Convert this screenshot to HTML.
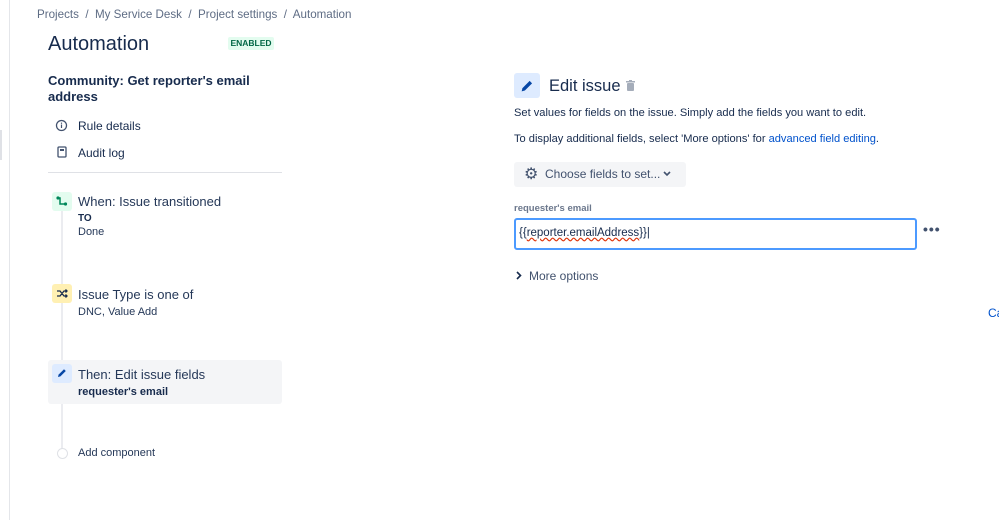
<!DOCTYPE html>
<html><head><meta charset="utf-8"><style>
*{margin:0;padding:0;box-sizing:border-box}
body{width:999px;height:520px;overflow:hidden;background:#fff;font-family:"Liberation Sans",sans-serif;color:#172b4d;position:relative}
.a{position:absolute;white-space:nowrap}
</style></head><body>
<div class="a" style="left:9px;top:0;width:1px;height:520px;background:#e4e6ea"></div>
<div class="a" style="left:0;top:130px;width:2px;height:30px;background:#dfe1e6"></div>
<div class="a" style="left:37px;top:8px;font-size:11.6px;color:#5e6c84">Projects &nbsp;/&nbsp; My Service Desk &nbsp;/&nbsp; Project settings &nbsp;/&nbsp; Automation</div>
<div class="a" style="left:48px;top:33px;font-size:20px;color:#172b4d">Automation</div>
<div class="a" style="left:228px;top:37px;width:46px;height:13px;background:#e3fcef;color:#006644;font-size:8.5px;font-weight:bold;text-align:center;line-height:13px;border-radius:2px">ENABLED</div>
<div class="a" style="left:48px;top:73px;font-size:13px;font-weight:bold;line-height:16px;white-space:normal;width:220px">Community: Get reporter's email address</div>
<svg class="a" style="left:55px;top:119px" width="13" height="13" viewBox="0 0 13 13"><circle cx="6.5" cy="6.5" r="5" fill="none" stroke="#42526e" stroke-width="1.3"/><rect x="5.9" y="5.5" width="1.2" height="3.5" fill="#42526e"/><rect x="5.9" y="3.6" width="1.2" height="1.2" fill="#42526e"/></svg>
<div class="a" style="left:78px;top:119px;font-size:12px;color:#172b4d">Rule details</div>
<svg class="a" style="left:57px;top:146px" width="10" height="12" viewBox="0 0 10 12"><rect x="1" y="1" width="8" height="10" rx="1" fill="none" stroke="#42526e" stroke-width="1.3"/><rect x="3" y="3" width="4" height="2" fill="#42526e"/></svg>
<div class="a" style="left:78px;top:146px;font-size:12px">Audit log</div>
<div class="a" style="left:48px;top:172px;width:234px;height:1px;background:#dfe1e6"></div>
<div class="a" style="left:61px;top:205px;width:2px;height:245px;background:#ebecf0"></div>
<div class="a" style="left:52px;top:192px;width:20px;height:19px;background:#e3fcef;border-radius:3px"></div>
<svg class="a" style="left:55px;top:195px" width="14" height="13" viewBox="0 0 14 13"><path d="M3 3 L5 3 L5 9 L10 9" fill="none" stroke="#00875a" stroke-width="1.5"/><circle cx="3" cy="3" r="1.6" fill="#00875a"/><circle cx="10.5" cy="9" r="1.6" fill="#00875a"/></svg>
<div class="a" style="left:78px;top:194px;font-size:13px;color:#253858">When: Issue transitioned</div>
<div class="a" style="left:78px;top:213px;font-size:10px;font-weight:bold">TO</div>
<div class="a" style="left:78px;top:226px;font-size:11px;color:#253858">Done</div>
<div class="a" style="left:52px;top:284px;width:20px;height:19px;background:#fff0b3;border-radius:3px"></div>
<svg class="a" style="left:56px;top:288px" width="12" height="11" viewBox="0 0 12 11"><path d="M1 3 L4 3 L8 8 L11 8 M1 8 L4 8 L8 3 L11 3 M9.5 1.5 L11 3 L9.5 4.5 M9.5 6.5 L11 8 L9.5 9.5" fill="none" stroke="#172b4d" stroke-width="1.3"/></svg>
<div class="a" style="left:78px;top:287px;font-size:13px;color:#253858">Issue Type is one of</div>
<div class="a" style="left:78px;top:306px;font-size:11px;color:#253858">DNC, Value Add</div>
<div class="a" style="left:48px;top:360px;width:234px;height:44px;background:#f4f5f7;border-radius:3px"></div>
<div class="a" style="left:52px;top:364px;width:20px;height:19px;background:#deebff;border-radius:3px"></div>
<svg class="a" style="left:56px;top:367px" width="12" height="12" viewBox="0 0 12 12"><path d="M2 10 L2.6 7.6 L8 2.2 L9.8 4 L4.4 9.4 Z" fill="#0747a6"/></svg>
<div class="a" style="left:78px;top:367px;font-size:13px;color:#253858">Then: Edit issue fields</div>
<div class="a" style="left:78px;top:386px;font-size:11px;font-weight:bold">requester's email</div>
<div class="a" style="left:57px;top:448px;width:11px;height:11px;border:1px solid #dfe1e6;border-radius:50%;background:#fff"></div>
<div class="a" style="left:78px;top:447px;font-size:11px;color:#253858">Add component</div>

<div class="a" style="left:514px;top:73px;width:26px;height:25px;background:#deebff;border-radius:3px"></div>
<svg class="a" style="left:519px;top:78px" width="16" height="16" viewBox="0 0 12 12"><path d="M2 10 L2.6 7.6 L8 2.2 L9.8 4 L4.4 9.4 Z" fill="#0747a6"/></svg>
<div class="a" style="left:549px;top:77px;font-size:16.5px;color:#172b4d">Edit issue</div>
<svg class="a" style="left:626px;top:80px" width="9" height="11" viewBox="0 0 9 11"><rect x="0" y="1" width="9" height="1.5" fill="#a5adba"/><rect x="3" y="0" width="3" height="1.5" fill="#a5adba"/><rect x="1" y="3" width="7" height="8" rx="1" fill="#a5adba"/></svg>
<div class="a" style="left:514px;top:107px;font-size:11.1px;color:#172b4d">Set values for fields on the issue. Simply add the fields you want to edit.</div>
<div class="a" style="left:514px;top:133px;font-size:11.1px;color:#172b4d">To display additional fields, select 'More options' for <span style="color:#0052cc">advanced field editing</span>.</div>
<div class="a" style="left:514px;top:162px;width:172px;height:25px;background:#f4f5f7;border-radius:3px"></div>
<div class="a" style="left:524px;top:164px;font-size:16px;color:#42526e">⚙</div>
<div class="a" style="left:545px;top:167px;font-size:12px;color:#42526e">Choose fields to set...</div>
<svg class="a" style="left:663px;top:171px" width="8" height="6" viewBox="0 0 8 6"><path d="M1 1 L4 4 L7 1" fill="none" stroke="#42526e" stroke-width="1.6"/></svg>
<div class="a" style="left:514px;top:203px;font-size:9.5px;font-weight:bold;color:#6b778c">requester's email</div>
<div class="a" style="left:514px;top:218px;width:403px;height:32px;border:2px solid #4c9aff;border-radius:3px;background:#fff"></div>
<div class="a" style="left:519px;top:227px;font-size:11.5px;color:#172b4d">{{<span style="text-decoration:underline wavy #de350b">reporter.emailAddress</span>}}|</div>
<div class="a" style="left:923px;top:221px;font-size:14px;font-weight:bold;color:#42526e;letter-spacing:1px">•••</div>
<svg class="a" style="left:516px;top:271px" width="6" height="9" viewBox="0 0 6 9"><path d="M1 1 L4.5 4.5 L1 8" fill="none" stroke="#172b4d" stroke-width="1.6"/></svg>
<div class="a" style="left:529px;top:269px;font-size:12px;color:#42526e">More options</div>
<div class="a" style="left:988px;top:306px;font-size:12px;color:#0052cc">Ca</div>
</body></html>
